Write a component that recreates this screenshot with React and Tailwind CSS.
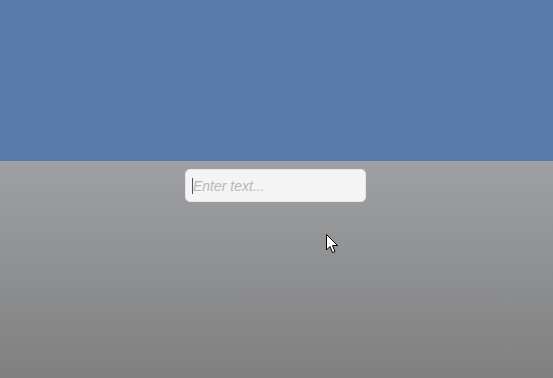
export default function App() {
  return (
    <div className="relative w-[553px] h-[378px] overflow-hidden flex flex-col" style={{ fontFamily: '"Liberation Sans", Arial, sans-serif' }}>
      {/* Sky */}
      <div className="h-[161px] bg-[#5a7aab] shrink-0" />
      {/* Ground */}
      <div className="flex-1 bg-gradient-to-b from-[#9ea0a3] to-[#808080] flex flex-col items-center pt-[8px]">
        <div className="w-[181px] h-[33px] ml-[-2px] rounded-[5px] bg-[#f4f4f4] border border-[#e6e6e6] flex items-center pl-[6px]">
          <span className="w-px h-[16px] bg-[#555]" />
          <span className="text-[14px] italic text-[#b8b8b8] leading-none">Enter text...</span>
        </div>
      </div>
      {/* Mouse pointer */}
      <svg className="absolute left-[326px] top-[234px]" width="13" height="20" viewBox="0 0 13 20">
        <path d="M0.5 0.5 L0.5 16 L4 12.5 L6.5 18.5 L9 17.5 L6.5 11.5 L11.5 11.5 Z" fill="#fff" stroke="#000" strokeWidth="1" strokeLinejoin="miter" />
      </svg>
    </div>
  )
}
